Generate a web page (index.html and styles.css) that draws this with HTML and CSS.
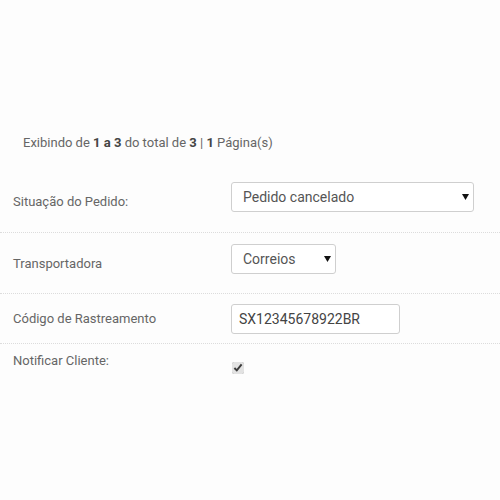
FILE: index.html
```html
<!DOCTYPE html>
<html lang="pt-BR">
<head>
    <meta charset="UTF-8">
    <meta name="viewport" content="width=device-width, initial-scale=1.0">
    <title>Pedido</title>
    <link rel="stylesheet" href="styles.css">
</head>

<body>
    <div class="pagina">
        <div class="resumo">
            Exibindo de <b>1 a 3</b> do total de <b>3</b> | <b>1</b> Página(s)
        </div>

        <div class="linha linha-situacao">
            <label class="rotulo" for="situacao">Situação do Pedido:</label>
            <div class="caixa-select larga">
                <select id="situacao" class="campo">
                    <option>Pedido cancelado</option>
                </select>
                <svg class="seta" width="7" height="6" viewBox="0 0 7 6"><path d="M0 0 H7 L3.5 6 Z" fill="#111"/></svg>
            </div>
        </div>

        <div class="linha linha-transp">
            <label class="rotulo" for="transp">Transportadora</label>
            <div class="caixa-select curta">
                <select id="transp" class="campo">
                    <option>Correios</option>
                </select>
                <svg class="seta" width="7" height="6" viewBox="0 0 7 6"><path d="M0 0 H7 L3.5 6 Z" fill="#111"/></svg>
            </div>
        </div>

        <div class="linha linha-codigo">
            <label class="rotulo" for="codigo">Código de Rastreamento</label>
            <input id="codigo" class="campo texto" type="text" value="SX12345678922BR">
        </div>

        <div class="linha linha-notificar">
            <label class="rotulo" for="notificar">Notificar Cliente:</label>
            <input id="notificar" class="check" type="checkbox" checked>
        </div>
    </div>
</body>
</html>
```

FILE: styles.css
```css
body {
    margin: 0;
    background-color: #fdfdfd;
    font-family: Roboto, "Liberation Sans", sans-serif;
    color: #666;
}

.pagina {
    padding-top: 134px;
}

.resumo {
    padding-left: 23px;
    font-size: 13px;
    line-height: 18px;
    margin-bottom: 20px;
}

.resumo b {
    color: #444;
}

.linha {
    display: flex;
    align-items: center;
    border-bottom: 1px dotted #dcdcdc;
}

.linha-situacao {
    padding: 10px 0 20px;
}

.linha-transp {
    padding: 11px 0 19px;
}

.linha-codigo {
    padding: 10px 0 9px;
}

.linha-notificar {
    border-bottom: none;
    padding: 8px 0 12px;
    align-items: flex-start;
}

.rotulo {
    width: 218px;
    padding-left: 13px;
    font-size: 13px;
    line-height: 18px;
}

.linha-situacao .rotulo,
.linha-transp .rotulo {
    padding-top: 10px;
}

.caixa-select {
    position: relative;
}

.campo {
    display: block;
    box-sizing: border-box;
    height: 30px;
    border: 1px solid #cfcfcf;
    border-radius: 3px;
    background-color: #fff;
    font-family: Roboto, "Liberation Sans", sans-serif;
    font-size: 14px;
    color: #555;
    -webkit-appearance: none;
    appearance: none;
    outline: none;
}

select.campo {
    padding-left: 11px;
}

.larga select {
    width: 243px;
}

.curta select {
    width: 105px;
}

.seta {
    position: absolute;
    right: 5px;
    top: 12px;
    pointer-events: none;
}

.texto {
    width: 169px;
    height: 30px;
    padding-left: 7px;
    color: #444;
}

.check {
    width: 12px;
    height: 12px;
    margin: 10px 0 0 1px;
    accent-color: #e2e2e2;
}
```
